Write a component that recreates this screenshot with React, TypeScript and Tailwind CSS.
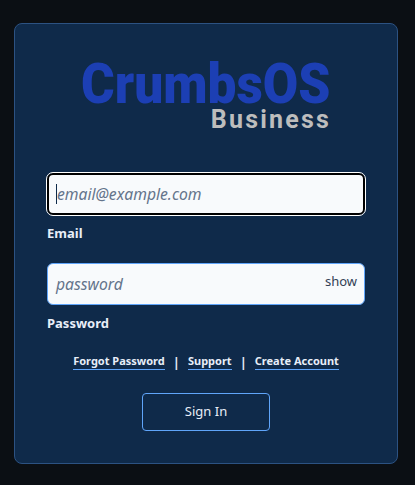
export default function App() {
  return (
    <div className="min-h-[485px] bg-[#0b0f14] pl-[14px] pr-[17px] pt-[23px] font-['Noto_Sans',sans-serif]">
      <div className="h-[441px] rounded-lg border border-[#2c5282] bg-[#0f2a4a] px-8 pt-[37px]">
        <div className="ml-[34px] flex h-[72px] w-[250px] flex-col font-['Roboto',sans-serif] font-bold">
          <span className="h-[46px] origin-left scale-x-[0.918] whitespace-nowrap text-[56px] font-black leading-[47px] text-[#1c3fb4]">CrumbsOS</span>
          <span className="mt-[1px] self-end text-[25px] leading-[24px] tracking-[2.2px] text-[#bdbdbd]">Business</span>
        </div>

        <div className="mt-[40px] flex h-[42px] items-center rounded-md border-2 border-black bg-[#f8fafc] pl-[7px] outline outline-1 outline-white">
          <span className="h-5 w-px bg-[#0f2a4a]" />
          <span className="mt-[2px] text-[15.7px] italic text-[#64748b]">email@example.com</span>
        </div>
        <label className="mt-[9px] block text-[13px] font-bold leading-[18px] text-[#e8eef8]">Email</label>

        <div className="mt-[21px] flex h-[42px] items-center justify-between rounded-md border border-[#60a5fa] bg-[#f8fafc] pl-2 pr-[7px]">
          <span className="mt-[2px] text-[15.7px] italic text-[#64748b]">password</span>
          <span className="mb-1 text-[13px] text-[#334155]">show</span>
        </div>
        <label className="mt-[9px] block text-[13px] font-bold leading-[18px] text-[#e8eef8]">Password</label>

        <div className="mt-[21px] flex items-center justify-center gap-[8px] text-[11px] font-bold leading-[16px] text-[#e8eef8]">
          <a className="border-b border-[#60a5fa]">Forgot Password</a>
          <span className="text-[13px]">|</span>
          <a className="border-b border-[#60a5fa]">Support</a>
          <span className="text-[13px]">|</span>
          <a className="border-b border-[#60a5fa]">Create Account</a>
        </div>

        <div className="mt-[23px] flex justify-center">
          <button className="h-[38px] w-[128px] rounded border border-[#60a5fa] text-[13px] text-[#e8eef8]">Sign In</button>
        </div>
      </div>
    </div>
  )
}
